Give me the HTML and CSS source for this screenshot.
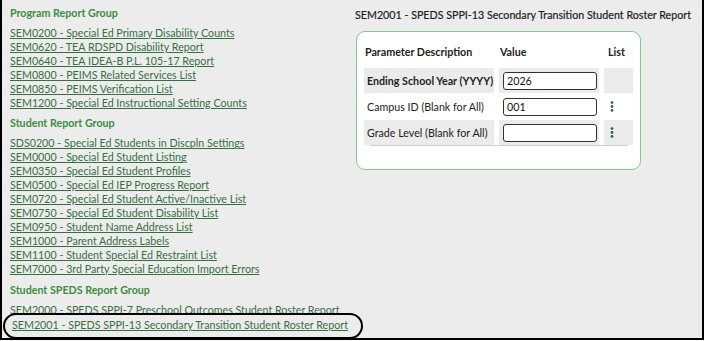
FILE: index.html
```html
<!DOCTYPE html>
<html>
<head>
<meta charset="utf-8">
<link rel="stylesheet" href="styles.css">
</head>
<body>
<div class="frame">
  <div class="left">
    <div class="group">
      <div class="group-title">Program Report Group</div>
      <a class="link" href="#">SEM0200 - Special Ed Primary Disability Counts</a>
      <a class="link" href="#">SEM0620 - TEA RDSPD Disability Report</a>
      <a class="link" href="#">SEM0640 - TEA IDEA-B P.L. 105-17 Report</a>
      <a class="link" href="#">SEM0800 - PEIMS Related Services List</a>
      <a class="link" href="#">SEM0850 - PEIMS Verification List</a>
      <a class="link" href="#">SEM1200 - Special Ed Instructional Setting Counts</a>
    </div>
    <div class="group">
      <div class="group-title">Student Report Group</div>
      <a class="link" href="#">SDS0200 - Special Ed Students in Discpln Settings</a>
      <a class="link" href="#">SEM0000 - Special Ed Student Listing</a>
      <a class="link" href="#">SEM0350 - Special Ed Student Profiles</a>
      <a class="link" href="#">SEM0500 - Special Ed IEP Progress Report</a>
      <a class="link" href="#">SEM0720 - Special Ed Student Active/Inactive List</a>
      <a class="link" href="#">SEM0750 - Special Ed Student Disability List</a>
      <a class="link" href="#">SEM0950 - Student Name Address List</a>
      <a class="link" href="#">SEM1000 - Parent Address Labels</a>
      <a class="link" href="#">SEM1100 - Student Special Ed Restraint List</a>
      <a class="link" href="#">SEM7000 - 3rd Party Special Education Import Errors</a>
    </div>
    <div class="group last">
      <div class="group-title">Student SPEDS Report Group</div>
      <a class="link" href="#">SEM2000 - SPEDS SPPI-7 Preschool Outcomes Student Roster Report</a>
      <div class="spacer"></div>
      <div class="highlight"><a class="link" href="#">SEM2001 - SPEDS SPPI-13 Secondary Transition Student Roster Report</a></div>
    </div>
  </div>
  <div class="right">
    <div class="report-title">SEM2001 - SPEDS SPPI-13 Secondary Transition Student Roster Report</div>
    <div class="card">
      <div class="grid">
        <div class="hd">Parameter Description</div>
        <div class="hd">Value</div>
        <div class="hd hd-list">List</div>

        <div class="cell desc shade strong">Ending School Year (YYYY)</div>
        <div class="cell shade"><div class="input">2026</div></div>
        <div class="cell shade"></div>

        <div class="cell desc">Campus ID (Blank for All)</div>
        <div class="cell"><div class="input">001</div></div>
        <div class="cell list"><svg class="dots" width="4" height="11" viewBox="0 0 4 11"><circle cx="2" cy="1.6" r="1.4"/><circle cx="2" cy="5.5" r="1.4"/><circle cx="2" cy="9.4" r="1.4"/></svg></div>

        <div class="cell desc shade">Grade Level (Blank for All)</div>
        <div class="cell shade"><div class="input"></div></div>
        <div class="cell list shade"><svg class="dots" width="4" height="11" viewBox="0 0 4 11"><circle cx="2" cy="1.6" r="1.4"/><circle cx="2" cy="5.5" r="1.4"/><circle cx="2" cy="9.4" r="1.4"/></svg></div>
      </div>
      <div class="rule"></div>
    </div>
  </div>
</div>
</body>
</html>
```

FILE: styles.css
```css
html, body {
  margin: 0;
  padding: 0;
  background: #ffffff;
}
body {
  font-family: Lato, "Open Sans", sans-serif;
  font-size: 10.7px;
  color: #222;
}
.frame {
  box-sizing: border-box;
  width: 704px;
  height: 340px;
  border: 2px solid #000;
  border-top: none;
  background: #ececec;
  display: flex;
  overflow: hidden;
}
.left {
  width: 345px;
  flex: none;
  padding: 6px 0 0 8px;
  display: flex;
  flex-direction: column;
  gap: 7px;
}
.group {
  display: flex;
  flex-direction: column;
  position: relative;
}
.group-title {
  font-weight: bold;
  color: #3b8c3f;
  line-height: 14px;
  margin-bottom: 6px;
}
.link {
  color: #35703e;
  text-decoration: underline;
  line-height: 13.9px;
  white-space: nowrap;
}
.spacer {
  height: 13.9px;
}
.highlight {
  position: absolute;
  left: -7px;
  top: 30px;
  width: 360px;
  height: 26px;
  border: 2px solid #000;
  border-radius: 13px;
  background: #ececec;
  padding: 3px 0 0 7px;
  box-sizing: border-box;
}
.right {
  padding: 8px 0 0 0;
}
.report-title {
  line-height: 14px;
  color: #1e1e1e;
  white-space: nowrap;
  -webkit-text-stroke: 0.2px #1e1e1e;
}
.card {
  margin-top: 9px;
  margin-left: 1px;
  width: 285px;
  height: 139px;
  box-sizing: border-box;
  background: #fff;
  border: 1px solid #7fcc88;
  border-radius: 9px;
  padding: 10px 6px 0 7px;
}
.grid {
  display: grid;
  grid-template-columns: 130px 100px 29px;
  grid-auto-rows: 25px;
  column-gap: 5px;
  row-gap: 1px;
}
.hd {
  font-weight: bold;
  color: #222;
  line-height: 16px;
  padding-top: 2px;
  padding-left: 1px;
  height: 25px;
  box-sizing: border-box;
}
.hd-list {
  padding-left: 4px;
}
.cell {
  display: flex;
  align-items: center;
}
.desc {
  padding-left: 3px;
  white-space: nowrap;
}
.strong {
  font-weight: bold;
}
.shade {
  background: #ebebeb;
}
.input {
  box-sizing: border-box;
  width: 94px;
  height: 18px;
  margin-left: 4px;
  background: #fff;
  border: 1px solid #333;
  border-radius: 3px;
  padding-left: 3px;
  line-height: 16px;
  color: #111;
}
.list {
  padding-left: 6px;
}
.dots {
  fill: #2e6a3c;
}
.rule {
  height: 1px;
  background: #c9cfd6;
  margin: 0 6px 0 6px;
}
```
